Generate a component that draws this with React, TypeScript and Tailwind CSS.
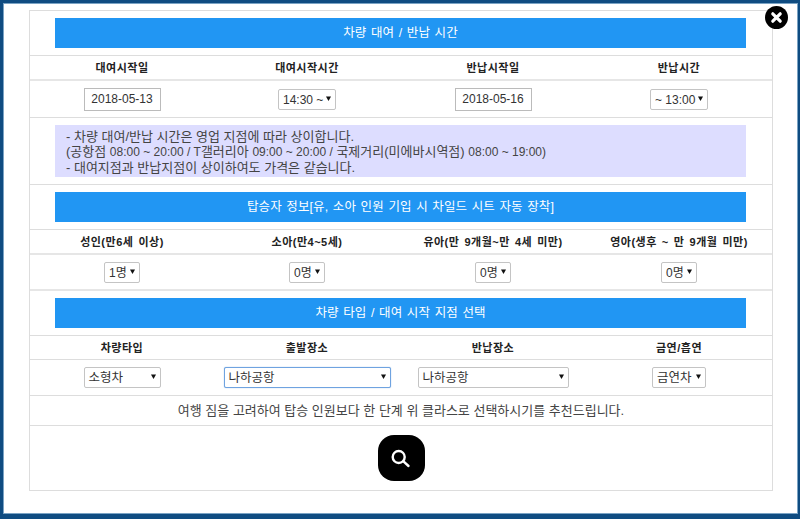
const sans = "font-['Liberation_Sans','Noto_Sans_CJK_KR',sans-serif]";
const cols = "grid-cols-[184px_186px_186px_186px]";

function Banner({ children }: { children: React.ReactNode }) {
  return (
    <div className="pl-[25px] pr-[26px] py-[7px] border-b border-[#dddddd]">
      <div className="h-[30px] pt-px bg-[#2196f3] text-white text-[12.5px] tracking-[0.1px] [word-spacing:1px] flex items-center justify-center whitespace-nowrap">
        {children}
      </div>
    </div>
  );
}

function Labels({ items, h, thin }: { items: string[]; h: string; thin?: boolean }) {
  return (
    <div
      className={`${cols} ${h} ${thin ? "border-b border-[#dddddd]" : "border-b-2 border-[#e6e6e6]"} grid pt-[2px] text-[11px] font-bold text-[#222222] tracking-[0.5px] [word-spacing:1.5px] items-center text-center`}
    >
      {items.map((t) => (
        <div key={t} className="whitespace-nowrap">{t}</div>
      ))}
    </div>
  );
}

function Sel({ text, w, focus, small }: { text: string; w: string; focus?: boolean; small?: boolean }) {
  return (
    <div
      className={`${w} h-[21px] rounded-[2px] border bg-white flex items-center justify-between pl-[4px] pr-[4px] pt-px ${small ? "text-[12px]" : "text-[12.5px]"} text-[#333333] ${
        focus ? "border-[#6fa3e0] shadow-[0_0_1px_#6fa3e0]" : "border-[#c4c4c4]"
      }`}
    >
      <span className="whitespace-nowrap">{text}</span>
      <svg width="5" height="5" viewBox="0 0 5 5" className="shrink-0 mb-[3px]">
        <path d="M0 0.5H5L2.5 5Z" fill="#111111" />
      </svg>
    </div>
  );
}

function DateBox({ value }: { value: string }) {
  return (
    <div className="w-[77px] h-[23px] border border-[#bbbbbb] bg-white flex items-center justify-center text-[12px] text-[#333333]">
      {value}
    </div>
  );
}

export default function App() {
  return (
    <div className={`${sans} w-[800px] h-[519px] bg-[#0f4c81] pt-[3px] pl-[3px]`}>
      <div className="relative w-[795px] h-[511px] bg-white pt-[6px] pl-[25px] border border-[#7aa3c4]">
        <div className="w-[744px] h-[481px] border border-[#dddddd] bg-white">
          <Banner>차량 대여 / 반납 시간</Banner>
          <Labels h="h-[25px]" items={["대여시작일", "대여시작시간", "반납시작일", "반납시간"]} />
          <div className={`grid ${cols} h-[37px] border-b border-[#dddddd] items-center justify-items-center`}>
            <DateBox value="2018-05-13" />
            <Sel small w="w-[58px]" text="14:30 ~" />
            <DateBox value="2018-05-16" />
            <Sel small w="w-[58px]" text="~ 13:00" />
          </div>
          <div className="pl-[25px] pr-[26px] py-[7px] border-b border-[#dddddd]">
            <div className="h-[52px] bg-[#ddddff] pl-[11px] pt-[4px] text-[13px] leading-[15px] text-[#444444] whitespace-nowrap">
              <div>- 차량 대여/반납 시간은 영업 지점에 따라 상이합니다.</div>
              <div>
                (공항점 <span className="text-[12px]">08:00 ~ 20:00 / T</span>갤러리아{" "}
                <span className="text-[12px]">09:00 ~ 20:00 /</span> 국제거리(미에바시역점){" "}
                <span className="text-[12px]">08:00 ~ 19:00)</span>
              </div>
              <div>- 대여지점과 반납지점이 상이하여도 가격은 같습니다.</div>
            </div>
          </div>
          <Banner>탑승자 정보[유, 소아 인원 기입 시 차일드 시트 자동 장착]</Banner>
          <Labels h="h-[25px]" items={["성인(만6세 이상)", "소아(만4~5세)", "유아(만 9개월~만 4세 미만)", "영아(생후 ~ 만 9개월 미만)"]} />
          <div className={`grid ${cols} h-[36px] border-b-2 border-[#e6e6e6] items-center justify-items-center`}>
            <Sel small w="w-[36px]" text="1명" />
            <Sel small w="w-[36px]" text="0명" />
            <Sel small w="w-[36px]" text="0명" />
            <Sel small w="w-[36px]" text="0명" />
          </div>
          <Banner>차량 타입 / 대여 시작 지점 선택</Banner>
          <Labels thin h="h-[24px]" items={["차량타입", "출발장소", "반납장소", "금연/흡연"]} />
          <div className={`grid ${cols} h-[36px] border-b border-[#dddddd] items-center justify-items-center`}>
            <Sel w="w-[77px]" text="소형차" />
            <Sel w="w-[167px]" text="나하공항" focus />
            <Sel w="w-[151px]" text="나하공항" />
            <Sel w="w-[54px]" text="금연차" />
          </div>
          <div className="h-[30px] border-b border-[#dddddd] flex items-center justify-center text-[13px] text-[#444444] whitespace-nowrap">
            여행 짐을 고려하여 탑승 인원보다 한 단계 위 클라스로 선택하시기를 추천드립니다.
          </div>
          <div className="flex justify-center pt-[9px]">
            <button className="w-[47px] h-[46px] rounded-[16px] bg-black flex items-center justify-center">
              <svg width="22" height="22" viewBox="0 0 22 22" fill="none">
                <circle cx="8.7" cy="10" r="6" stroke="white" strokeWidth="2.4" />
                <path d="M13.2 14.2L18.5 19" stroke="white" strokeWidth="2.4" strokeLinecap="round" />
              </svg>
            </button>
          </div>
        </div>
        <button className="absolute right-[9px] top-[2px] w-[23px] h-[23px] rounded-full bg-black flex items-center justify-center">
          <svg width="13" height="13" viewBox="0 0 13 13">
            <path d="M2.8 2.8L10.2 10.2M10.2 2.8L2.8 10.2" stroke="white" strokeWidth="3.2" strokeLinecap="round" />
          </svg>
        </button>
      </div>
    </div>
  );
}
